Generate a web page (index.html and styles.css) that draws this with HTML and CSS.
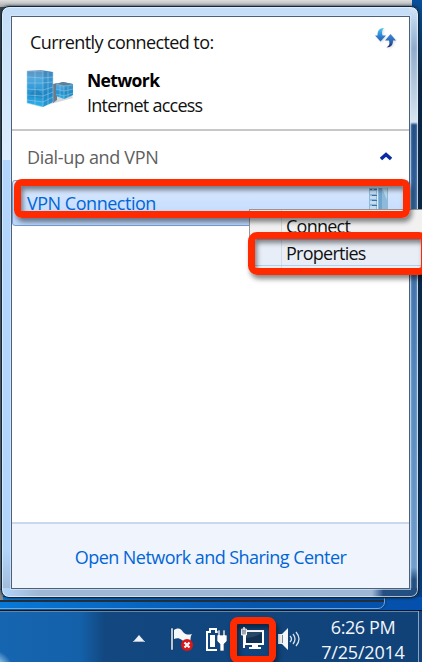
FILE: index.html
```html
<!DOCTYPE html>
<html lang="en">
<head>
<meta charset="utf-8">
<title>Network connections</title>
<link rel="stylesheet" href="styles.css">
</head>
<body>
<main class="desktop">
  <div class="back-window"></div>
  <section class="flyout">
    <div class="panel">
      <header class="status">
        <div class="status-top">
          <h1 class="heading">Currently connected to:</h1>
          <svg class="refresh" width="24" height="24" viewBox="0 0 24 24">
            <defs><linearGradient id="down" x1="0" y1="0" x2="0" y2="1"><stop offset="0" stop-color="#4cc8ee"/><stop offset=".55" stop-color="#3186d4"/><stop offset="1" stop-color="#285cae"/></linearGradient><linearGradient id="up" x1="0" y1="0" x2="0" y2="1"><stop offset="0" stop-color="#3b8ad8"/><stop offset=".5" stop-color="#2d69b8"/><stop offset="1" stop-color="#1c2f68"/></linearGradient></defs>
            <g class="soft"><path fill="url(#down)" d="M10 1C5 1 3.500 4 3.500 8.500H1l5.500 6 5.500-6H8.500C7.500 5 8 3 10 1Z"/><path fill="url(#up)" d="M12.500 20.500c5 0 6.500-3 6.500-7h3l-5.500-6.500-5.500 6.500h4c1 4 0 5-2.500 7Z"/></g>
          </svg>
        </div>
        <div class="network">
          <svg class="buildings" width="50" height="42" viewBox="0 0 50 42">
            <defs><linearGradient id="glass" x1="0" y1="0" x2="0" y2="1"><stop offset="0" stop-color="#6090bc"/><stop offset=".25" stop-color="#4fa9df"/><stop offset=".65" stop-color="#2191d2"/><stop offset="1" stop-color="#2fb2e8"/></linearGradient></defs>
            <path fill="#b9bdc1" d="m21 36 26-7-2-4-20 3Z" opacity=".6"/>
            <path fill="#6b7a86" d="m27 15 4-1v17l-4 3Z"/>
            <path fill="url(#glass)" d="m30 15 7-2 10 2v11l-9 4-8-3Z"/>
            <path fill="#2387bd" opacity=".55" d="m38 17 9-2v11l-9 4Z"/>
            <path fill="#5f7f98" d="m29 15 8-2 10 2-9 2Z"/>
            <path fill="none" stroke="#a1cadf" stroke-width=".5" d="m30 15 8 2 9-1M38 17v13M34 16v12M42 17v12M30 20l8 2 9-2M30 25l8 2 9-3"/>
            <path fill="url(#glass)" d="m1 2 14-1 12 2v30l-10 5L1 34Z"/>
            <path fill="#1c75b5" opacity=".4" d="m17 2 10 1v30l-10 5Z"/>
            <path fill="#237cad" opacity=".55" d="m2 27 8-8 7 7v3Z"/>
            <path fill="none" stroke="#a5d3e8" stroke-width=".5" d="M1 2v32l16 4V2ZM9 2v34M22 3v33M27 3v30M1 8l16 1 10-1M1 14h16l10-1M1 20l16 1 10-3M1 26l16 1 10-4M1 31l16 2 10-5"/>
          </svg>
          <div class="network-text"><strong class="net-name">Network</strong><span class="net-access">Internet access</span></div>
        </div>
      </header>
      <div class="group">
        <span class="group-name">Dial-up and VPN</span>
        <svg width="12" height="9" viewBox="0 0 12 9"><path fill="none" stroke="#0a2ba2" stroke-width="3.4" d="m1 7 5-4.500L11 7"/></svg>
      </div>
      <div class="connection">
        <span class="connection-name">VPN Connection</span>
        <svg class="server" width="19" height="22" viewBox="0 0 19 22">
          <path fill="#8fb9da" d="M0 0h19v22H0Z"/><path fill="#c4dcf1" d="M1 3h6v3H1Zm0 5h6v3H1Zm0 5h6v3H1Zm0 5h6v3H1Z"/><path fill="#3f6fa0" d="M1 1h2v1H1Zm4 0h3v1H5ZM3 7h5v1H3Zm0 5h5v1H3Zm0 5h5v1H3Z"/><path fill="#dceefb" d="M8 0h1v22H8Z"/><path fill="#6fa5cc" d="M10 0h3v22h-3Z"/><path fill="#b6d7ea" d="m13 0 5 12V0Z"/>
        </svg>
      </div>
      <div class="spacer"></div>
      <footer class="footer"><a class="center-link">Open Network and Sharing Center</a></footer>
    </div>
  </section>
  <nav class="menu">
    <div class="menu-item"><span class="connect">Connect</span></div>
    <div class="menu-item hot"><span class="properties">Properties</span></div>
  </nav>
  <footer class="taskbar">
    <div class="tray">
      <svg class="caret" width="12" height="8" viewBox="0 0 12 8"><path fill="#edf2f8" d="M6 0 12 7H0Z"/><path stroke="#aeb9c7" d="M0 6.500h12"/></svg>
      <svg class="flag" width="24" height="25" viewBox="0 0 24 25"><path fill="#f6f7f8" stroke="#173359" stroke-width=".5" d="M1 1h2v22H1Z"/><path fill="#f6f7f8" d="M4 3c5-3 7-1 9 2 3 3 5 3 9 2-2 3-1 5-2 8-4 2-6 0-8-2-3-2-5-2-8-1Z"/><circle cx="17" cy="18" r="6" fill="#df1517"/><path stroke="#fff" stroke-width="2.200" d="m14.500 15.500 5 5m0-5-5 5"/></svg>
      <svg class="power" width="23" height="25" viewBox="0 0 23 25"><path fill="none" stroke="#fff" stroke-width="2" d="M12 23H2V5h3V2h6v3h3"/><path fill="#fff" d="M5 8h5v12H5Z"/><path fill="#fff" stroke="#23456c" stroke-width=".7" d="M13 3h2v5h3V3h2v5h2v6l-3 3v7h-4v-7l-3-3V8h1Z"/></svg>
      <svg class="lan" width="24" height="24" viewBox="0 0 24 24"><path fill="#284868" stroke="#fff" stroke-width="2" d="M4 4h18v13H4Z"/><path fill="#103153" d="M5 11c6 0 10-2 16-5v10H5Z"/><path fill="#fff" d="M11 18h6v2h3v2H8v-2h3Z"/><path fill="#a9adb3" stroke="#fff" d="M0.500 2h5v6h-5Z"/><path stroke="#fff" stroke-width="2" d="M3 0v3M3 8v13"/></svg>
      <svg class="volume" width="24" height="24" viewBox="0 0 24 24"><path fill="#f4f6f8" d="M1 7h4l6-6v22l-6-6H1Z"/><path stroke="#76899d" d="M5.500 8v8"/><path fill="none" stroke="#d6e1eb" stroke-width="1.300" d="M13 9q3 3 0 6m3-8q4 5 0 10m3-12q6 7 0 14"/></svg>
      <div class="clock"><span class="time">6:26 PM</span><span class="date">7/25/2014</span></div>
    </div>
    <div class="show-desktop"></div>
  </footer>
  <div class="mark mark-vpn"></div>
  <div class="mark mark-properties"></div>
  <div class="mark mark-tray"></div>
</main>
</body>
</html>
```
FILE: styles.css
```css
* { box-sizing: border-box; }
body { margin: 0; font: 18px/24px "Open Sans", "Noto Sans", sans-serif; }
.desktop {
  position: relative;
  width: 422px;
  height: 662px;
  overflow: hidden;
  padding: 6px 4px 0 1px;
  display: flex;
  flex-direction: column;
  background:
    linear-gradient(#ddd, #aaa) 0 0 / 412px 7px no-repeat,
    linear-gradient(#444, #888) 0 7px / 3px 593px no-repeat,
    linear-gradient(90deg, #0878d6, #0756ae 60%, #0450ac) 0 597px / 422px 14px no-repeat,
    linear-gradient(#08509a, #082545 12%, #092d55 65%, #05479a);
}
.back-window {
  position: absolute;
  left: -9px;
  top: 590px;
  width: 394px;
  height: 19px;
  border: 1px solid #75a6cc;
  border-radius: 0 0 7px 7px;
  background: linear-gradient(transparent 9px, #222f3d 9px 11px, transparent 11px);
  box-shadow: 0 0 3px #092f5c;
}
.flyout {
  position: relative;
  width: 418px;
  height: 592px;
  padding: 9px;
  border: 1px solid #142536;
  border-radius: 8px;
  background:
    linear-gradient(90deg, transparent, #234f82 25%) right 0 bottom 0 / 46px 9px no-repeat,
    linear-gradient(90deg, #d7e8fa66, transparent 35% 65%, #d7e8fa55) right 0 top 8px / 8px 580px no-repeat,
    linear-gradient(#d1e5fb, #90abc9 7%, #d9e5f2 19.5%, #234f87 20%, #35659e 35%, #5689bf 65%, #709dcc 95%, #234f82 97%) right 0 top 0 / 9px 590px no-repeat,
    linear-gradient(90deg, #b2d5fc, #9db7d4 10%) left 0 bottom 0 / 372px 9px no-repeat,
    linear-gradient(#c5def7, #dceeff 26%, #b2d5fc 26%, #b2d5fc 92%, #9db7d4);
  box-shadow: inset 0 0 0 1px #e5f4ffb0, 0 0 3px #0b2540;
}
.panel {
  width: 399px;
  height: 573px;
  border: 1px solid #4e6079;
  display: flex;
  flex-direction: column;
  background: #fff;
  box-shadow: 0 0 0 1px #d9ebfca0;
}
.status { height: 114px; padding: 10px 11px 0 14px; border-bottom: 2px solid #c8c8c8; }
.status-top { height: 33px; display: flex; justify-content: space-between; padding-left: 4px; }
.heading { margin: 3px 0 0; font-size: 18px; font-weight: 400; letter-spacing: -.6px; color: #111; }
.soft { filter: drop-shadow(1px 1px 1px #9995); }
.network { display: flex; gap: 11px; padding-top: 9px; }
.network-text { display: flex; flex-direction: column; line-height: 25px; margin-top: -1px; }
.net-name { color: #000; font-size: 17.5px; letter-spacing: -.63px; }
.net-access { letter-spacing: -.75px; color: #111; }
.group { height: 49px; padding: 2px 17px 0 15px; display: flex; align-items: center; justify-content: space-between; color: #606060; letter-spacing: -.34px; }
.connection { height: 46px; border: 1px solid #779dd0; border-radius: 3px; background: linear-gradient(#dceaff, #bcd7fc); padding: 7px 20px 0 14px; display: flex; justify-content: space-between; color: #0066d6; letter-spacing: -.48px; }
.connection-name { padding-top: 3px; }
.spacer { flex: 1; }
.footer { height: 66px; border-top: 2px solid #c8d8ed; background: #f0f4fc; display: grid; place-items: center; padding-top: 1px; }
.center-link { color: #0066d6; letter-spacing: -.55px; white-space: nowrap; }
.menu { position: absolute; left: 249px; top: 209px; width: 180px; height: 60px; padding: 2px; border: 1px solid #979797; background: linear-gradient(90deg, #f0f0f0 31px, #d8d8d8 31px 32px, #f1f1f1 32px); color: #111; display: flex; flex-direction: column; }
.menu-item { height: 28px; padding: 2px 0 0 34px; letter-spacing: -.75px; }
.hot { border: 1px solid #b3cdef; background: linear-gradient(90deg, #e8eef8 28px, #d4dbe6 28px 29px, #e9eef6 29px); padding: 1px 0 0 33px; }
.taskbar { margin: 12px -4px 0 -1px; height: 52px; position: relative; border-top: 1px solid #06152c; background: radial-gradient(circle at -10px 62px, #a9d5f2 12px, transparent 24px), linear-gradient(90deg, #1665b0, #1461aa 80px, #124780 105px, #104278); box-shadow: inset 0 1px #5c89af; display: flex; }
.tray { flex: 1; display: flex; align-items: flex-start; padding-left: 133px; }
.caret { margin-top: 24px; }
.flag { margin: 16px 0 0 25px; }
.power { margin: 16px 0 0 11px; }
.lan { margin: 16px 0 0 13px; }
.volume { margin: 16px 0 0 12px; }
.clock { width: 106px; margin: 4px 0 0 9px; display: flex; flex-direction: column; align-items: center; color: #f3f6fa; line-height: 25px; }
.time { letter-spacing: -.4px; white-space: nowrap; }
.date { letter-spacing: -.2px; white-space: nowrap; }
.show-desktop { width: 4px; border-left: 1px solid #86a5c2; background: #164377; }
.mark { position: absolute; border: 7px solid #ff2a00; border-radius: 8px; box-shadow: 2px 4px 5px #0007, inset 2px 4px 5px #0007; }
.mark-vpn { left: 14px; top: 179px; width: 396px; height: 39px; }
.mark-properties { left: 248px; top: 232px; width: 180px; height: 43px; border-radius: 9px; }
.mark-tray { left: 230px; top: 617px; width: 46px; height: 46px; }
```
